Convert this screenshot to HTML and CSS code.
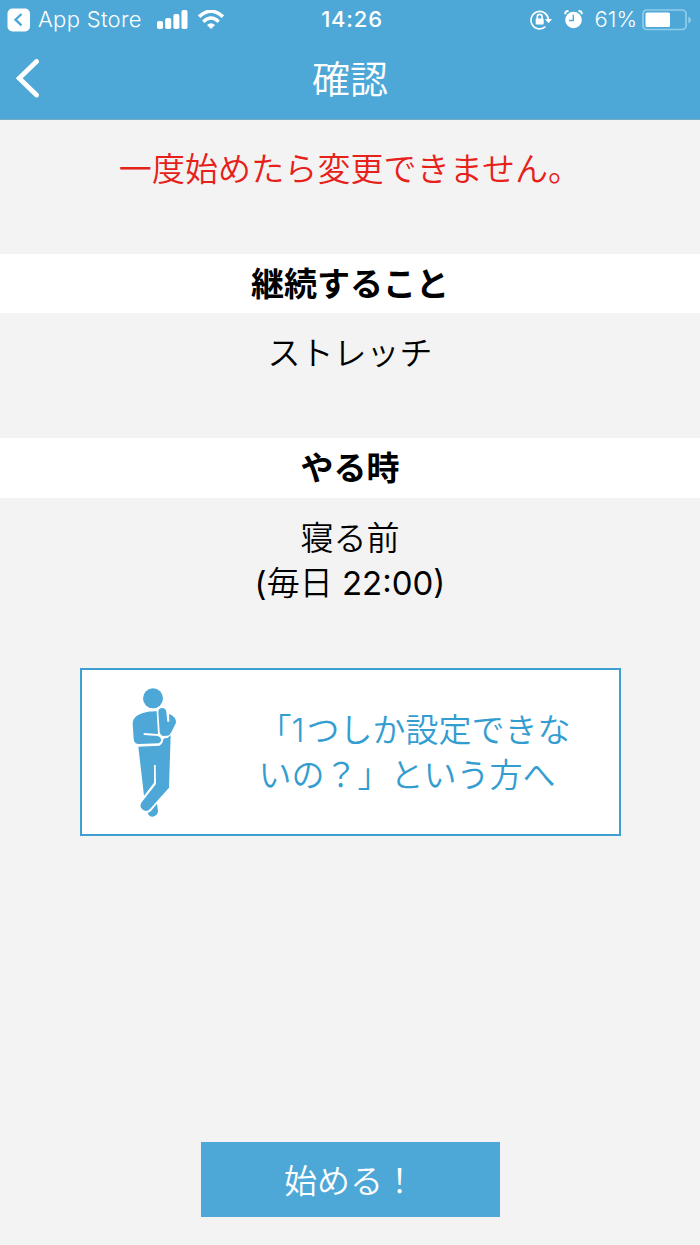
FILE: index.html
```html
<!DOCTYPE html>
<html lang="ja">
<head>
  <meta charset="utf-8">
  <title>確認</title>
  <link rel="stylesheet" href="styles.css">
</head>
<body>
  <header class="header">
    <div class="status-bar">
      <div class="status-left">
        <svg class="back-app" width="24" height="24" viewBox="0 0 24 24">
          <rect x="0.5" y="0.5" width="22.5" height="23" rx="5" fill="#fff"/>
          <path d="M14.500 6L8.500 11.700L14.500 17.400" fill="none" stroke="#4da8d7" stroke-width="2.400"/>
        </svg>
        <span class="app-name">App Store</span>
        <svg class="signal" width="31" height="20" viewBox="0 0 31 20" fill="#fff">
          <rect x="0" y="11" width="6" height="8" rx="1.8"/>
          <rect x="8.2" y="8" width="6" height="11" rx="1.8"/>
          <rect x="16.4" y="4" width="6" height="15" rx="1.8"/>
          <rect x="24.5" y="0" width="6" height="19" rx="1.8"/>
        </svg>
        <svg class="wifi" width="26" height="20" viewBox="0 0 26 20">
          <path d="M1.200 6.700Q13 -4.300 24.800 6.700" fill="none" stroke="#fff" stroke-width="3.600"/>
          <path d="M5.300 11.700Q13 4.400 20.700 11.700" fill="none" stroke="#fff" stroke-width="3.300"/>
          <path d="M9 15Q13 11.400 17 15L13 19Z" fill="#fff"/>
        </svg>
      </div>
      <span class="time">14:26</span>
      <div class="status-right">
        <svg class="lock" width="22" height="20" viewBox="0 0 22 20">
          <path d="M15.400 16.700A8.700 8.700 0 1 1 18.400 9.500" fill="none" stroke="#fff" stroke-width="1.600"/>
          <path d="M15 9H22L18.500 13.200Z" fill="#fff"/>
          <path d="M7.300 9V6.800A2.400 2.400 0 0 1 12.100 6.800V9" fill="none" stroke="#fff" stroke-width="1.600"/>
          <rect x="5.700" y="8.600" width="8" height="6" rx="0.800" fill="#fff"/>
        </svg>
        <svg class="alarm" width="19" height="20" viewBox="0 0 19 20">
          <circle cx="9.500" cy="10" r="8.300" fill="#fff"/>
          <path d="M1.200 4.300Q1 0.900 4.500 0.900M17.800 4.300Q18 0.900 14.500 0.900" fill="none" stroke="#fff" stroke-width="2"/>
          <path d="M9.300 4.700V10.500H5" fill="none" stroke="#4da8d7" stroke-width="1.400"/>
        </svg>
        <span class="percent">61%</span>
        <svg class="battery" width="49" height="22" viewBox="0 0 49 22">
          <rect x="1" y="1" width="43" height="19.500" rx="3.800" fill="none" stroke="#90cdea" stroke-width="1.700"/>
          <rect x="3.500" y="3.500" width="24.500" height="14.500" rx="1.500" fill="#fff"/>
          <path d="M46.300 7.500Q49 8.500 49 11T46.300 14.500Z" fill="#90cdea"/>
        </svg>
      </div>
    </div>
    <div class="nav-bar">
      <svg class="back" width="24" height="40" viewBox="0 0 24 40">
        <path d="M21.500 2.500L4.200 19.200L21.500 36" fill="none" stroke="#fff" stroke-width="4.800" stroke-linecap="round"/>
      </svg>
      <h1 class="title">確認</h1>
    </div>
  </header>

  <main class="content">
    <p class="warning">一度始めたら変更できません。</p>

    <h2 class="label">継続すること</h2>
    <p class="value">ストレッチ</p>

    <h2 class="label">やる時</h2>
    <p class="value">寝る前<br><span class="latin">(</span>毎日 <span class="latin">22:00)</span></p>

    <a class="info-box">
      <svg class="person" width="48" height="132" viewBox="180 80 144 396">
        <g fill="#4da8d7">
          <circle cx="249" cy="114" r="30"/>
          <path d="M260 153C225 153 189 162 188 190L191 235Q192 251 207 251L265 249Q274 246 273 237Q272 229 263 227L221 224V218L264 221Z"/>
          <path d="M265 155Q265 143 277 143Q288 144 289 155L292 184H298L297 161Q319 169 318 187L304 216Q298 228 290 226Q286 226 280 227Q270 224 269 214Z"/>
          <path d="M205 259L268 256Q279 251 280 237Q282 233 292 233L302 225L297 382L240 446Q229 457 217 447Q207 438 215 426L258 371L257 314H252V367L222 406Z"/>
          <path d="M261 430L264 453Q263 466 249 469Q237 470 233 458Q240 457 245 450Z"/>
        </g>
      </svg>
      <span class="info-text">「<span class="digit">1</span>つしか設定できな<br>いの？」という方へ</span>
    </a>
  </main>

  <footer class="footer">
    <button class="start-button">始める！</button>
  </footer>
</body>
</html>
```

FILE: styles.css
```css
* {
  box-sizing: border-box;
}

body {
  margin: 0;
  height: 1245px;
  display: flex;
  flex-direction: column;
  background-color: #f3f3f3;
  color: #000;
  font-family: Inter, "Noto Sans CJK JP", sans-serif;
  font-size: 33px;
  font-weight: 350;
}

h1, h2, p {
  margin: 0;
}

svg {
  display: block;
  flex: none;
}

.header {
  height: 120px;
  background-color: #4da8d7;
  border-bottom: 1px solid #75a9c4;
  color: #fff;
}

.status-bar {
  display: grid;
  grid-template-columns: 1fr auto 1fr;
  align-items: center;
  height: 39px;
  padding: 0 9px 0 7px;
  line-height: 39px;
  white-space: nowrap;
}

.status-left, .status-right {
  display: flex;
  align-items: center;
}

.status-right {
  justify-content: flex-end;
}

.app-name {
  width: 105px;
  margin: 0 14px 0 7px;
  font-size: 22px;
  letter-spacing: 0.3px;
}

.wifi {
  margin-left: 10px;
}

.time {
  padding-left: 6px;
  font-size: 22px;
  font-weight: 500;
  letter-spacing: 0.8px;
}

.alarm {
  margin-left: 12px;
}

.percent {
  margin: 0 5px 0 11px;
  font-size: 22px;
}

.nav-bar {
  display: grid;
  grid-template-columns: 84px 1fr 84px;
  align-items: center;
  height: 80px;
}

.back {
  margin-left: 15px;
}

.title {
  font-size: 38px;
  font-weight: 350;
  line-height: 80px;
  text-align: center;
}

.content {
  flex: 1;
  text-align: center;
}

.warning {
  height: 133.6px;
  padding-top: 27px;
  color: #e6211a;
  letter-spacing: 0.1px;
  line-height: 45px;
}

.label {
  height: 59.8px;
  background-color: #fff;
  font-size: 33px;
  font-weight: 700;
  line-height: 61px;
}

.value {
  height: 125px;
  padding-top: 18px;
  line-height: 45px;
}

.latin {
  font-weight: 400;
}

.info-box {
  display: flex;
  width: 541px;
  height: 168px;
  margin: 45px auto 0 79.5px;
  padding: 17px 0 0 48px;
  border: 2px solid #3f9fd0;
  background-color: #fff;
  color: #349dd0;
  text-align: left;
}

.info-text {
  margin: 21px 0 0 81px;
  line-height: 45px;
  white-space: nowrap;
}

.digit {
  margin: 0 2px 0 0;
}

.footer {
  height: 103px;
  text-align: center;
}

.start-button {
  width: 299px;
  height: 75px;
  padding: 0 0 2px;
  border: none;
  background-color: #4da8d7;
  color: #fff;
  font: inherit;
}
```
